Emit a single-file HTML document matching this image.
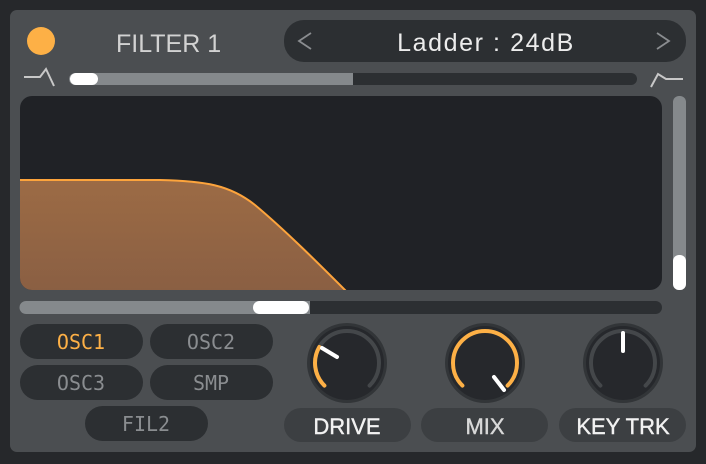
<!DOCTYPE html>
<html><head><style>
html,body{margin:0;padding:0;background:#26282b;width:706px;height:464px;overflow:hidden}
svg{display:block}
text{font-family:"Liberation Sans","DejaVu Sans",sans-serif}
.m{font-family:"DejaVu Sans Mono","Liberation Mono",monospace}
</style></head><body>
<svg width="706" height="464" viewBox="0 0 706 464">
<rect x="0" y="0" width="706" height="464" fill="#26282b"/>
<rect x="10" y="10" width="686" height="442" rx="7" fill="#4b4e51"/>
<circle cx="41" cy="41" r="14" fill="#fdb046"/>
<text x="116" y="52" font-size="25" fill="#d2d2d2">FILTER 1</text>
<rect x="284" y="20" width="402" height="42" rx="20" fill="#2c2f32"/>
<path d="M311,33 L299,41 L311,49" fill="none" stroke="#8a8d90" stroke-width="1.8"/>
<path d="M657,33 L669,41 L657,49" fill="none" stroke="#8a8d90" stroke-width="1.8"/>
<text x="486" y="51" font-size="25" letter-spacing="1.6" fill="#ececec" text-anchor="middle">Ladder  :  24dB</text>
<path d="M24,77 L40,77 L46,69 L54,86" fill="none" stroke="#c8c8c8" stroke-width="2"/>
<path d="M651,87 L658,74 L666,79 L683,79" fill="none" stroke="#c8c8c8" stroke-width="2"/>
<rect x="69" y="73" width="568" height="12" rx="6" fill="#2c2f32"/>
<path d="M75,73 L353,73 L353,85 L75,85 A6,6 0 0 1 75,73Z" fill="#85898c"/>
<rect x="70" y="73" width="28" height="12" rx="6" fill="#fff"/>
<rect x="20" y="96" width="642" height="194" rx="12" fill="#202226"/>
<defs><linearGradient id="g" x1="0" y1="0" x2="0" y2="1"><stop offset="0" stop-color="#9c6b45"/><stop offset="1" stop-color="#8a5f43"/></linearGradient>
<clipPath id="c"><rect x="20" y="96" width="642" height="194" rx="12"/></clipPath></defs>
<g clip-path="url(#c)">
<path d="M20,180 L160,180 C205,181 230,185 255,205 C285,230 320,265 347,292 L20,292Z" fill="url(#g)"/>
<path d="M20,180 L160,180 C205,181 230,185 255,205 C285,230 320,265 347,292" fill="none" stroke="#fda43c" stroke-width="2"/>
</g>
<rect x="673" y="96" width="13" height="194" rx="6" fill="#85898c"/>
<rect x="673" y="255" width="13" height="35" rx="6" fill="#fff"/>
<rect x="20" y="301" width="642" height="13" rx="6.5" fill="#2c2f32"/>
<path d="M26,301 L310,301 L310,314 L26,314 A6.5,6.5 0 0 1 26,301Z" fill="#85898c"/>
<rect x="253" y="301" width="56" height="13" rx="6.5" fill="#fff"/>
<g font-size="20" text-anchor="middle">
<rect x="20" y="324" width="123" height="35" rx="17.5" fill="#2c2f32"/>
<text class="m" x="81" y="349" fill="#fdb046">OSC1</text>
<rect x="150" y="324" width="123" height="35" rx="17.5" fill="#2c2f32"/>
<text class="m" x="211" y="349" fill="#8a8d90">OSC2</text>
<rect x="20" y="365" width="123" height="35" rx="17.5" fill="#2c2f32"/>
<text class="m" x="81" y="390" fill="#8a8d90">OSC3</text>
<rect x="150" y="365" width="123" height="35" rx="17.5" fill="#2c2f32"/>
<text class="m" x="211" y="390" fill="#8a8d90">SMP</text>
<rect x="85" y="406" width="123" height="35" rx="17.5" fill="#2c2f32"/>
<text class="m" x="146" y="431" fill="#8a8d90">FIL2</text>
</g>
<g fill="none" stroke-width="4" stroke-linecap="round">
<circle cx="347" cy="363" r="40" fill="#323538" stroke="none"/>
<circle cx="347" cy="363" r="37" fill="#26282c" stroke="none"/>
<path d="M324.4,385.6 A32,32 0 1 1 369.6,385.6" stroke="#44474a"/>
<path d="M324.4,385.6 A32,32 0 0 1 319.3,347" stroke="#fdb046"/>
<line x1="322" y1="348" x2="337" y2="357" stroke="#fff" stroke-width="4"/>
<circle cx="485" cy="363" r="40" fill="#323538" stroke="none"/>
<circle cx="485" cy="363" r="37" fill="#26282c" stroke="none"/>
<path d="M462.4,385.6 A32,32 0 1 1 507.6,385.6" stroke="#fdb046"/>
<line x1="494" y1="377" x2="504" y2="390" stroke="#fff" stroke-width="4"/>
<circle cx="623" cy="363" r="40" fill="#323538" stroke="none"/>
<circle cx="623" cy="363" r="37" fill="#26282c" stroke="none"/>
<path d="M600.4,385.6 A32,32 0 1 1 645.6,385.6" stroke="#44474a"/>
<line x1="623" y1="333" x2="623" y2="351" stroke="#fff" stroke-width="4"/>
</g>
<rect x="284" y="408" width="127" height="34" rx="17" fill="#3c3f42"/>
<text x="347" y="434" font-size="22" fill="#f2f2f2" stroke="#f2f2f2" stroke-width="0.4" text-anchor="middle">DRIVE</text>
<rect x="421" y="408" width="127" height="34" rx="17" fill="#3c3f42"/>
<text x="485" y="434" font-size="22" fill="#d8d8d8" stroke="#d8d8d8" stroke-width="0.4" text-anchor="middle">MIX</text>
<rect x="559" y="408" width="127" height="34" rx="17" fill="#3c3f42"/>
<text x="623" y="434" font-size="22" fill="#f2f2f2" stroke="#f2f2f2" stroke-width="0.4" text-anchor="middle">KEY TRK</text>
</svg>
</body></html>
